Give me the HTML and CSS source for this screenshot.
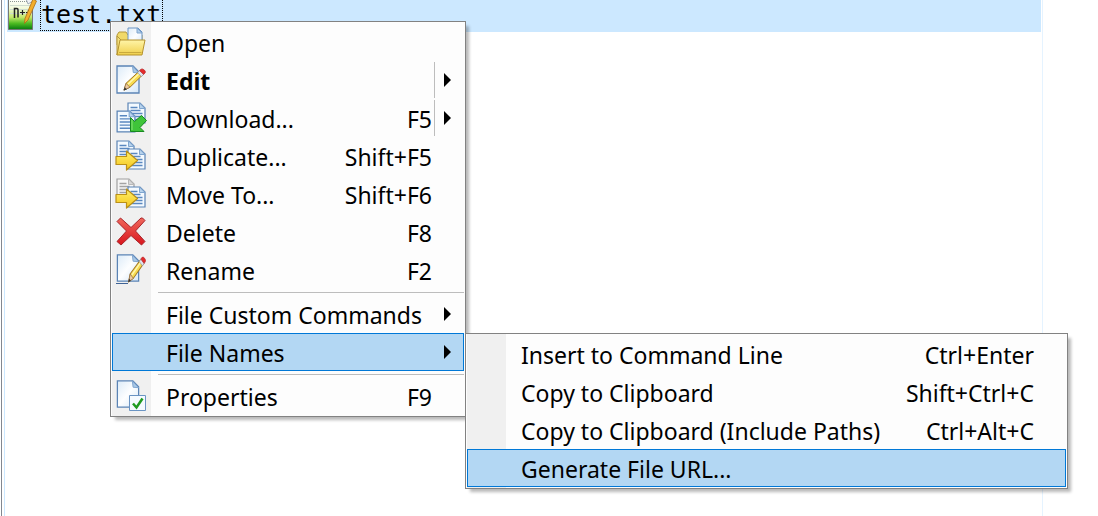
FILE: index.html
```html
<!DOCTYPE html>
<html lang="en">
    <head>
        <meta charset="utf-8">
        <title>test.txt</title>
        <link rel="stylesheet" href="styles.css">
    </head>
    <body>
        <svg class="defs" aria-hidden="true">
            <defs>
                <linearGradient id="paper" x1="0" y1="0" x2="1" y2="1">
                    <stop offset="0" stop-color="#dcebf8"/>
                    <stop offset=".5" stop-color="#fdfeff"/>
                    <stop offset="1" stop-color="#d3e6f8"/>
                </linearGradient>
                <linearGradient id="yellow" x1="0" y1="0" x2="0" y2="1">
                    <stop offset="0" stop-color="#fff5a8"/>
                    <stop offset="1" stop-color="#f0cf4c"/>
                </linearGradient>
                <linearGradient id="arrow" x1="0" y1="0" x2="0" y2="1">
                    <stop offset="0" stop-color="#fff06a"/>
                    <stop offset="1" stop-color="#f5c61c"/>
                </linearGradient>
                <linearGradient id="red" x1="0" y1="0" x2="0" y2="1">
                    <stop offset="0" stop-color="#f0685c"/>
                    <stop offset="1" stop-color="#d8141c"/>
                </linearGradient>
                <linearGradient id="green" x1="0" y1="0" x2="0" y2="1">
                    <stop offset="0" stop-color="#ffffff"/>
                    <stop offset=".3" stop-color="#f2fadc"/>
                    <stop offset=".6" stop-color="#c3e86a"/>
                    <stop offset=".8" stop-color="#4dbb22"/>
                    <stop offset="1" stop-color="#067a10"/>
                </linearGradient>
                <symbol id="page" viewBox="0 0 24 29">
                    <path d="M1 1h16l6 6v21H1z" fill="url(#paper)" stroke="#5b84b5" stroke-width="1.3"/>
                    <path d="M16.500 1l.8 6.500 5.700.5z" fill="#a9c8e6" stroke="#7fa5cf"/>
                </symbol>
                <symbol id="doc" viewBox="0 0 19 22">
                    <path d="M1 1h12l5 5v15H1z" fill="#f4faff" stroke="#5b84b5" stroke-width="1.2"/>
                    <path d="M12.500 1v5.500H18z" fill="#b7d2ec" stroke="#7fa5cf"/>
                    <path d="M3.500 5.500h7M3.500 8.500h10M3.500 11.500h12M3.500 14.500h12M3.500 17.500h12" stroke="#5a88c0" stroke-width="1.3"/>
                </symbol>
                <symbol id="pencil" viewBox="0 0 24 25" preserveAspectRatio="none">
                    <path d="M2 23l2-7L17 3.500l3.500 3.800L8 20z" fill="#f8dc50" stroke="#a07424"/>
                    <path d="M6 17L17.500 5.500" stroke="#fff6b0" stroke-width="1.500"/>
                    <path d="M2 23l2-7 4 4z" fill="#edc9a0" stroke="#8a6840" stroke-width=".7"/>
                    <path d="M1.500 23.500l1.200-3.500 2.200 2.300z" fill="#333"/>
                    <path d="M15.500 5l2.300-2.500 4 4-2.300 2.300z" fill="#dfe5ee" stroke="#8b94a5" stroke-width=".7"/>
                    <path d="M17.500 2.700l1.500-1.500q1.500-.8 3.300.9t.8 3l-1.500 1.600z" fill="#e32b2b" stroke="#b52d31" stroke-width=".7"/>
                </symbol>
                <symbol id="right-arrow" viewBox="0 0 24 21">
                    <path d="M1 6.500h10.500V1l11 9.500-11 9.500v-5.500H1z" fill="url(#arrow)" stroke="#ba9018" stroke-width="1.200" stroke-linejoin="round"/>
                </symbol>
            </defs>
        </svg>

        <main class="panel">
            <div class="file">
                <svg class="file-icon" viewBox="0 0 30 30" aria-hidden="true">
                    <path d="M.5-1h24v30.500H.5z" fill="url(#green)" stroke="#777"/>
                    <path d="M2 1.500h22" stroke="#8b9590" stroke-dasharray="1 1"/>
                    <path d="M2 5.500h22M2 9.500h22M2 13.500h22" stroke="#cfdccf"/>
                    <path d="M6.500 18V8.500h2.500q1 0 1 1.500v7.500" fill="none" stroke="#222" stroke-width="1.500"/>
                    <path d="M12 12.500h5M14.500 10v5M18 12.500h5M20.500 10v5" stroke="#222" stroke-width="1.200"/>
                    <path d="M18-1h8l-1 2-5 3z" fill="#eef1f5" stroke="#8d99a8" stroke-width=".8"/>
                    <path d="M25-1l3.500 2L20 20l-3.500 3.500.5-5z" fill="#f2ae2c" stroke="#a86c18" stroke-width=".8"/>
                </svg>
                <span class="file-name">test.txt</span>
            </div>

            <ul class="menu context-menu">
                <li>
                    <button class="item">
                        <svg class="icon" viewBox="0 0 32 32" aria-hidden="true">
                            <path d="M2 9l2-3h7l2 3h14v10H2z" fill="#f1d968" stroke="#b5983a"/>
                            <path d="M13 2h10l4 4v13H13z" fill="url(#paper)" stroke="#6b94c4"/>
                            <path d="M22 2v5h5z" fill="#b2cfea" stroke="#7fa5cf"/>
                            <path d="M2 10v19l4-15z" fill="#f3df7c" stroke="#b5983a"/>
                            <path d="M5 14h25l-3 15H2z" fill="url(#yellow)" stroke="#b5922c" stroke-linejoin="round"/>
                            <path d="M4 26.500h22.500" stroke="#c9a93c"/>
                        </svg>
                        <span class="label">Open</span>
                    </button>
                </li>
                <li>
                    <button class="item default">
                        <svg class="icon" viewBox="0 0 32 32" aria-hidden="true">
                            <use href="#page" x="1" y="1" width="24" height="29"/>
                            <use href="#pencil" x="7" y="4" width="24" height="24"/>
                        </svg>
                        <span class="label">Edit</span>
                        <span class="arrow split"></span>
                    </button>
                </li>
                <li>
                    <button class="item">
                        <svg class="icon" viewBox="0 0 32 32" aria-hidden="true">
                            <use href="#doc" x="12" y="0" width="19" height="22"/>
                            <use href="#doc" x="1" y="8" width="20" height="23"/>
                            <path d="M15.500 15.500l4 4 7-6 5 5-6.500 7 4 4H15.500z" fill="#3fc43a" stroke="#178a20" stroke-linejoin="round"/>
                            <path d="M17 18v10" stroke="#8ce678"/>
                        </svg>
                        <span class="label">Download...</span>
                        <span class="shortcut">F5</span>
                        <span class="arrow split"></span>
                    </button>
                </li>
                <li>
                    <button class="item">
                        <svg class="icon" viewBox="0 0 32 32" aria-hidden="true">
                            <use href="#doc" x="1" y="0" width="19" height="22"/>
                            <use href="#doc" x="12" y="8" width="19" height="22"/>
                            <use href="#right-arrow" x="0" y="10" width="24" height="21"/>
                        </svg>
                        <span class="label">Duplicate...</span>
                        <span class="shortcut">Shift+F5</span>
                    </button>
                </li>
                <li>
                    <button class="item">
                        <svg class="icon" viewBox="0 0 32 32" aria-hidden="true">
                            <use class="faded" href="#doc" x="1" y="0" width="19" height="22"/>
                            <use href="#doc" x="12" y="8" width="19" height="22"/>
                            <use href="#right-arrow" x="0" y="10" width="24" height="21"/>
                        </svg>
                        <span class="label">Move To...</span>
                        <span class="shortcut">Shift+F6</span>
                    </button>
                </li>
                <li>
                    <button class="item">
                        <svg class="icon" viewBox="0 0 32 32" aria-hidden="true">
                            <path d="M2 5.500l3.500-3.500L16 11.500 26 2h1.500L30 4.500 20.500 15 30 25.500 26.500 29 16 19.500 6 29 2 25.500 11.500 15z" fill="url(#red)" stroke="#a8242a" stroke-linejoin="round"/>
                        </svg>
                        <span class="label">Delete</span>
                        <span class="shortcut">F8</span>
                    </button>
                </li>
                <li>
                    <button class="item">
                        <svg class="icon" viewBox="0 0 32 32" aria-hidden="true">
                            <use href="#page" x="1" y="0" width="24" height="28"/>
                            <path d="M1 29.500h12" stroke="#3f6396"/>
                            <use href="#pencil" x="12" y="2" width="19" height="28"/>
                        </svg>
                        <span class="label">Rename</span>
                        <span class="shortcut">F2</span>
                    </button>
                </li>
                <li class="separator"></li>
                <li>
                    <button class="item">
                        <span class="icon"></span>
                        <span class="label">File Custom Commands</span>
                        <span class="arrow"></span>
                    </button>
                </li>
                <li class="parent">
                    <button class="item active">
                        <span class="icon"></span>
                        <span class="label">File Names</span>
                        <span class="arrow"></span>
                    </button>
                    <ul class="menu submenu">
                        <li>
                            <button class="item">
                                <span class="icon"></span>
                                <span class="label">Insert to Command Line</span>
                                <span class="shortcut">Ctrl+Enter</span>
                            </button>
                        </li>
                        <li>
                            <button class="item">
                                <span class="icon"></span>
                                <span class="label">Copy to Clipboard</span>
                                <span class="shortcut">Shift+Ctrl+C</span>
                            </button>
                        </li>
                        <li>
                            <button class="item">
                                <span class="icon"></span>
                                <span class="label">Copy to Clipboard (Include Paths)</span>
                                <span class="shortcut">Ctrl+Alt+C</span>
                            </button>
                        </li>
                        <li>
                            <button class="item active">
                                <span class="icon"></span>
                                <span class="label">Generate File URL...</span>
                            </button>
                        </li>
                    </ul>
                </li>
                <li class="separator"></li>
                <li>
                    <button class="item">
                        <svg class="icon" viewBox="0 0 32 32" aria-hidden="true">
                            <use href="#page" x="1" y="0" width="24" height="28"/>
                            <path d="M14.500 15.500h16v15h-16z" fill="#f5faff" stroke="#6a94c3"/>
                            <path d="M18 23.500l3.500 4 6-9" fill="none" stroke="#1f9a20" stroke-width="2.500"/>
                        </svg>
                        <span class="label">Properties</span>
                        <span class="shortcut">F9</span>
                    </button>
                </li>
            </ul>
        </main>
    </body>
</html>
```
FILE: styles.css
```css
body {
    margin: 0;
    background-color: #fff;
    color: #000;
    font-family: "Noto Sans", "Segoe UI", sans-serif;
    font-size: 23px;
}
.defs {
    position: absolute;
    width: 0;
    height: 0;
}
.panel {
    box-sizing: border-box;
    min-height: 100vh;
    margin-left: 4px;
    margin-right: 55px;
    padding: 0 1px 0 2px;
    border-left: 1px solid #cce8ff;
    border-right: 1px solid #e5f3ff;
    box-shadow: -2px 0 #fff, -3px 0 #828790;
}
.file {
    display: flex;
    align-items: flex-start;
    gap: 2px;
    box-sizing: border-box;
    height: 32px;
    padding-left: 1px;
    background-color: #cce8ff;
}
.file-icon {
    width: 30px;
    height: 30px;
}
.file-name {
    height: 30px;
    padding-right: 1px;
    border: 1px dotted #000;
    border-top: 0;
    font-family: "DejaVu Sans Mono", Consolas, monospace;
    font-size: 25px;
    line-height: 30px;
}

/* menus */
.menu {
    position: absolute;
    box-sizing: border-box;
    margin: 0;
    padding: 1px;
    list-style: none;
    border: 1px solid #828282;
    background: linear-gradient(to right, #fdfdfd 1px, #f0f0f0 1px, #f0f0f0 40px, #fdfdfd 40px);
    box-shadow: 4px 4px 3px -1px rgba(0, 0, 0, 0.28);
}
.context-menu {
    left: 110px;
    top: 21px;
    min-width: 356px;
}
.parent {
    position: relative;
}
.submenu {
    left: calc(100% + 1px);
    top: 0;
    min-width: 603px;
}
.item {
    display: flex;
    align-items: center;
    position: relative;
    box-sizing: border-box;
    width: 100%;
    height: 38px;
    margin: 0;
    padding: 0 31px 0 2px;
    border: 1px solid transparent;
    background: none;
    color: inherit;
    font: inherit;
    line-height: 32px;
    text-align: left;
    white-space: nowrap;
}
.item.active {
    border-color: #0078d7;
    background-color: #b3d7f3;
}
.default {
    font-weight: bold;
}
.icon {
    flex: none;
    width: 32px;
    height: 32px;
    margin-right: 19px;
}
.faded {
    filter: grayscale(1) opacity(0.7);
}
.label {
    flex: 1;
    padding-top: 2px;
}
.shortcut {
    padding-top: 2px;
}
.arrow {
    position: absolute;
    top: 0;
    right: 0;
    bottom: 0;
    width: 28px;
    border-left: 1px solid transparent;
}
.arrow.split {
    border-left-color: #bdbdbd;
}
.arrow::after {
    content: "";
    position: absolute;
    left: 9px;
    top: 11px;
    border: 7px solid transparent;
    border-left-color: #000;
    border-right: 0;
}
.separator {
    height: 1px;
    margin: 3px 0 2px 46px;
    background-color: #bdbdbd;
}
```
